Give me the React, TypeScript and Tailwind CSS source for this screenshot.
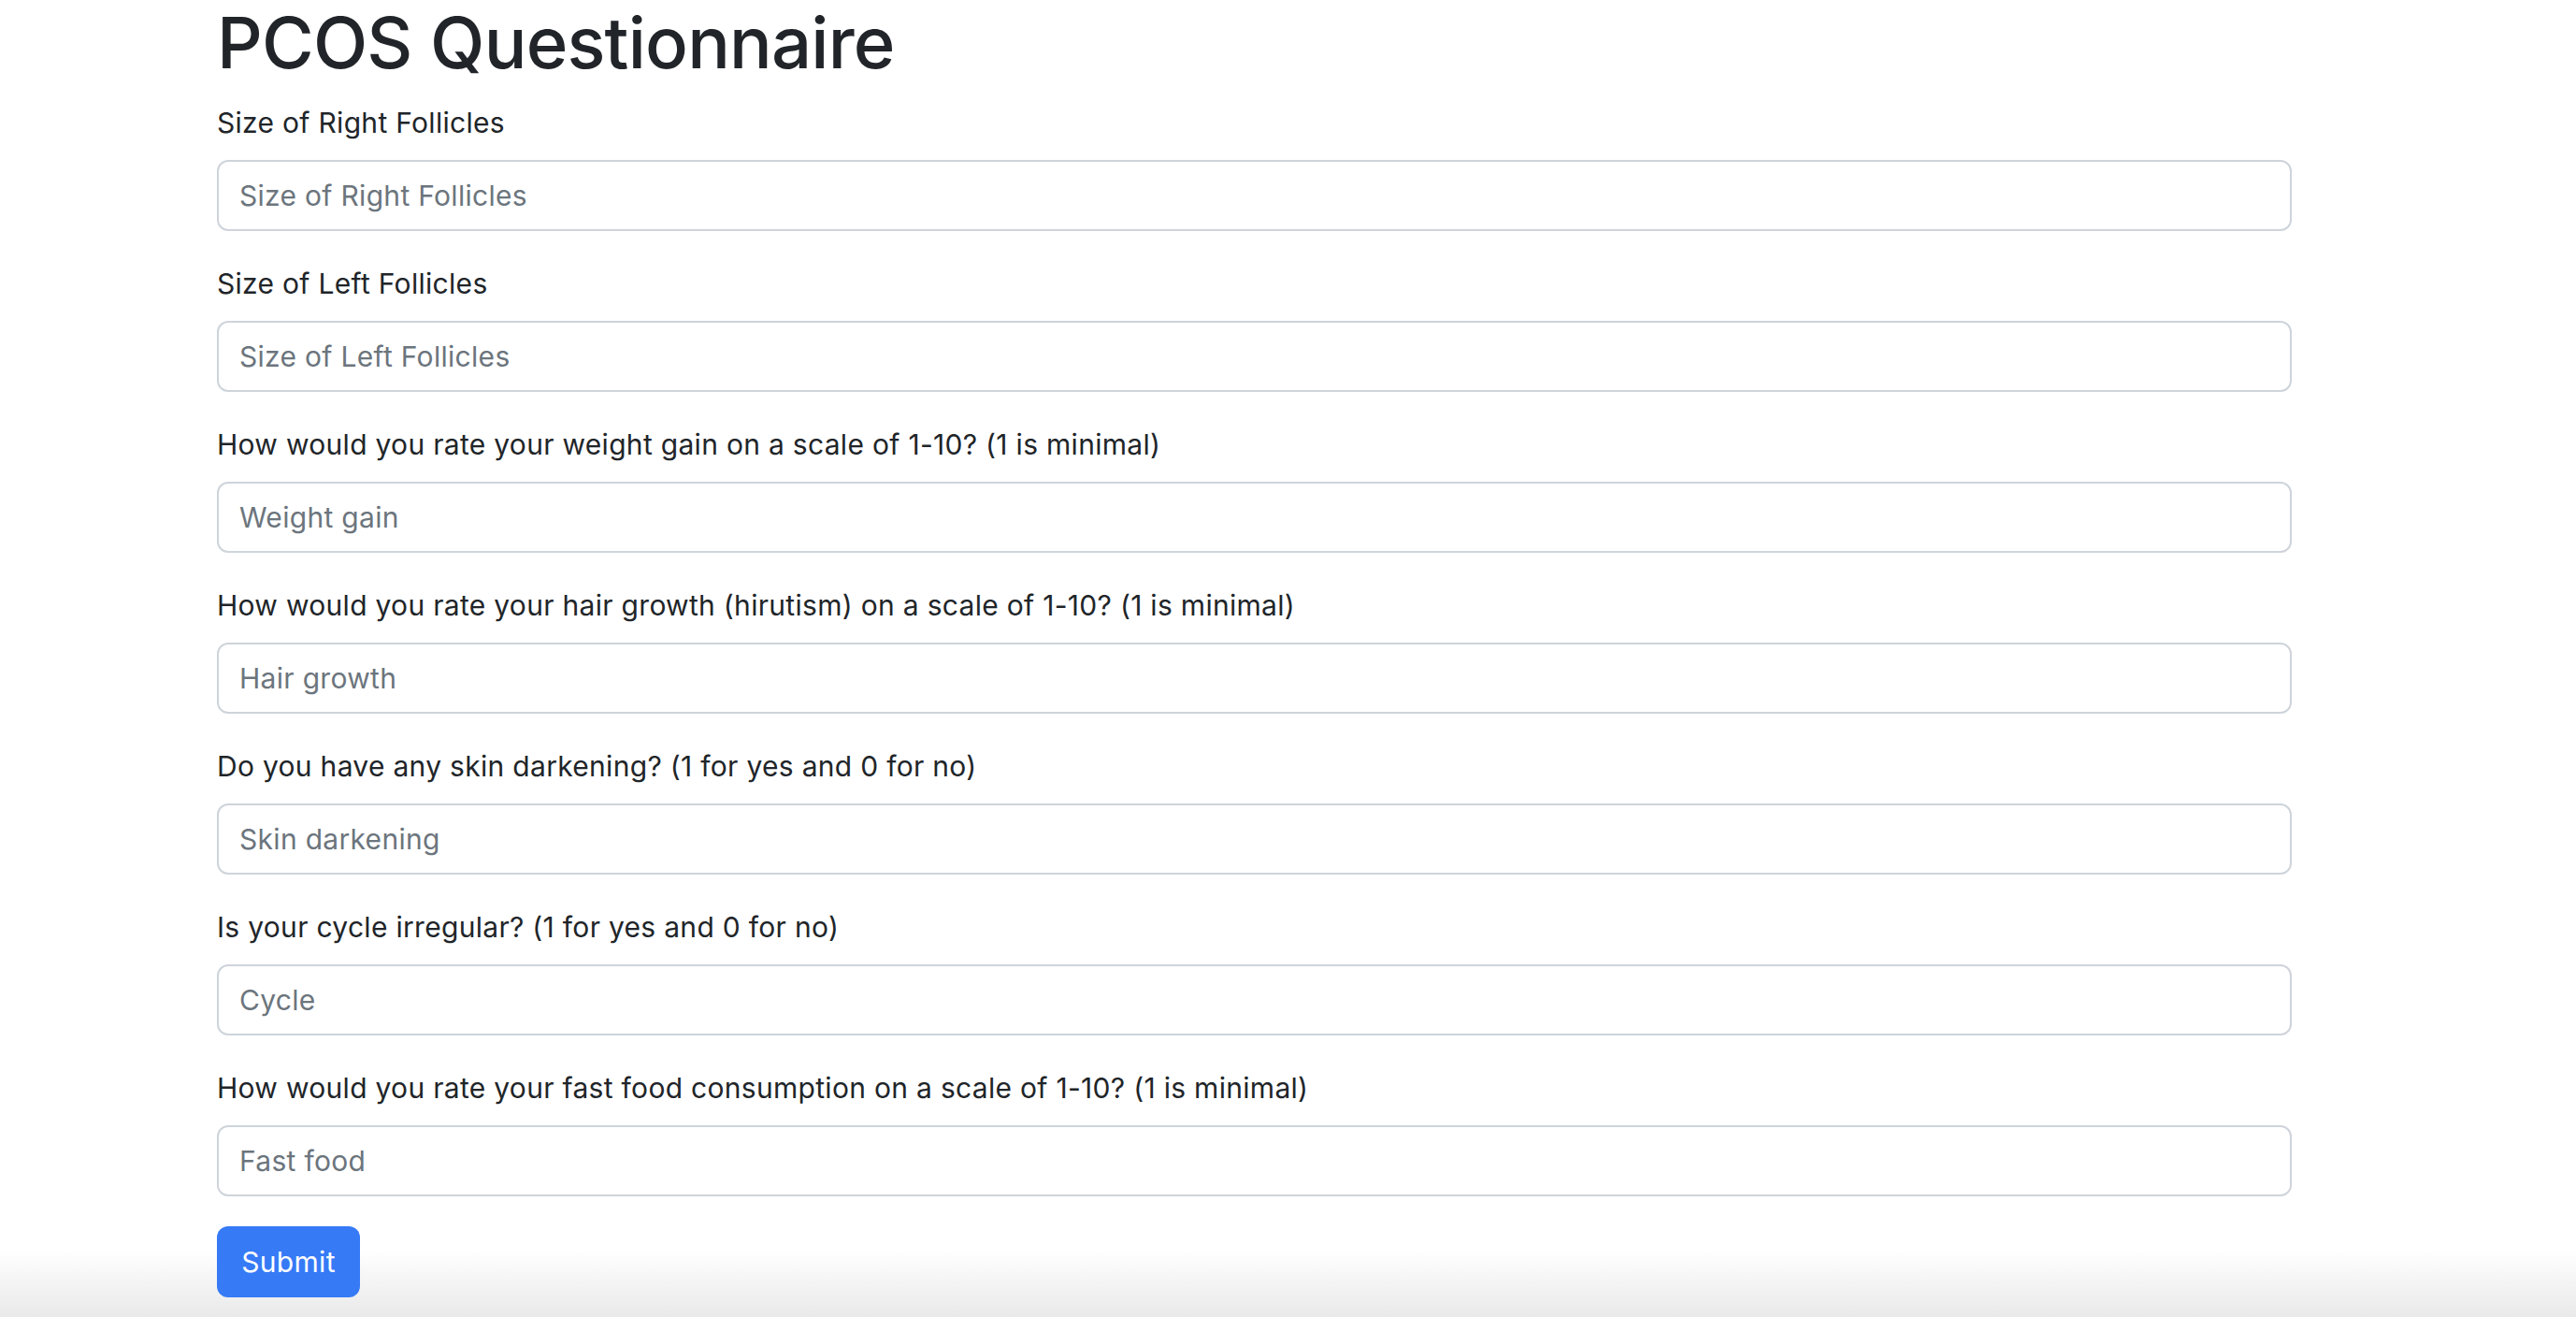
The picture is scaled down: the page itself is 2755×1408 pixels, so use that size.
const questions = [
  { label: "Size of Right Follicles", placeholder: "Size of Right Follicles" },
  { label: "Size of Left Follicles", placeholder: "Size of Left Follicles" },
  { label: "How would you rate your weight gain on a scale of 1-10? (1 is minimal)", placeholder: "Weight gain" },
  { label: "How would you rate your hair growth (hirutism) on a scale of 1-10? (1 is minimal)", placeholder: "Hair growth" },
  { label: "Do you have any skin darkening? (1 for yes and 0 for no)", placeholder: "Skin darkening" },
  { label: "Is your cycle irregular? (1 for yes and 0 for no)", placeholder: "Cycle" },
  { label: "How would you rate your fast food consumption on a scale of 1-10? (1 is minimal)", placeholder: "Fast food" },
];

export default function App() {
  return (
    <div
      className="h-[1408px] overflow-hidden bg-[linear-gradient(to_bottom,#ffffff_calc(100%-72px),#e9e9e9)] text-[#212529]"
      style={{ fontFamily: "Inter, 'Noto Sans', sans-serif" }}
    >
      <div className="ml-[232px] w-[2219px]">
        <h1 className="text-[76px] font-medium leading-[90px] tracking-[-0.8px]">PCOS Questionnaire</h1>
        <form className="mt-[17px]" onSubmit={(e) => e.preventDefault()}>
          {questions.map((q) => (
            <div key={q.label} className="mb-[32px]">
              <label className="mb-[16px] block text-[30px] leading-[48px] tracking-[0.3px]">{q.label}</label>
              <input
                type="text"
                placeholder={q.placeholder}
                className="block h-[76px] w-full rounded-[12px] border-2 border-[#ced4da] bg-white px-[22px] text-[30px] tracking-[0.3px] text-[#212529] outline-none placeholder:text-[#6c757d]"
              />
            </div>
          ))}
          <button
            type="submit"
            className="inline-flex h-[76px] w-[153px] items-center justify-center rounded-[12px] bg-[#367af6] text-[30px] tracking-[0.3px] text-white"
          >
            Submit
          </button>
        </form>
      </div>
    </div>
  );
}
